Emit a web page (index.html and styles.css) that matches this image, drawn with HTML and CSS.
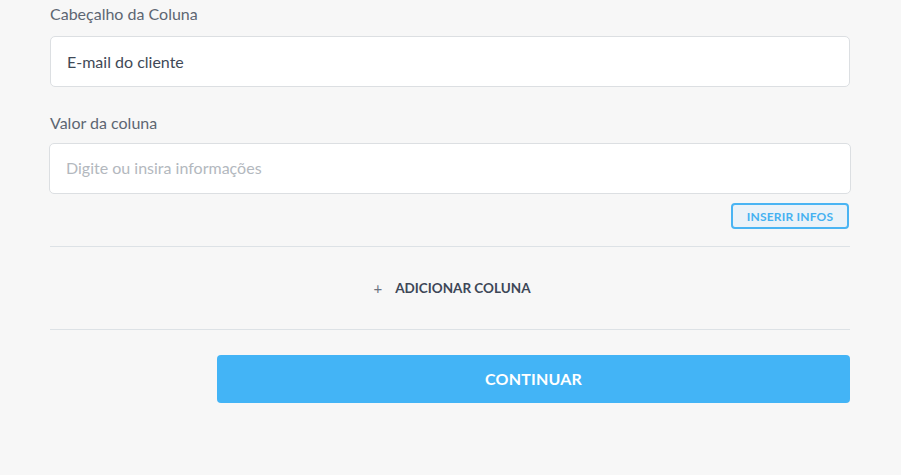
FILE: index.html
```html
<!DOCTYPE html>
<html lang="pt">
<head>
<meta charset="utf-8">
<link rel="stylesheet" href="styles.css">
</head>
<body>
<main class="form">
  <div class="field">
    <label class="label">Cabeçalho da Coluna</label>
    <div class="input">E-mail do cliente</div>
  </div>
  <div class="field field-2">
    <label class="label">Valor da coluna</label>
    <div class="input input-wide placeholder">Digite ou insira informações</div>
    <div class="insert-row"><button class="btn-outline">INSERIR INFOS</button></div>
  </div>
  <div class="add-row">
    <span class="plus">+</span><span class="add-text">ADICIONAR COLUNA</span>
  </div>
  <div class="actions">
    <button class="btn-primary">CONTINUAR</button>
  </div>
</main>
</body>
</html>
```

FILE: styles.css
```css
html, body {
  margin: 0;
  padding: 0;
  background: #f7f7f7;
  font-family: Lato, "Open Sans", sans-serif;
}
.form {
  width: 800px;
  margin-left: 50px;
  padding-top: 4px;
}
.field {
  display: flex;
  flex-direction: column;
}
.label {
  font-size: 16px;
  color: #5d6672;
  line-height: 20px;
  margin-bottom: 12px;
}
.input {
  box-sizing: border-box;
  height: 51px;
  background: #fff;
  border: 1px solid #dcdfe2;
  border-radius: 5px;
  padding: 0 16px;
  display: flex;
  align-items: center;
  font-size: 16px;
  color: #3f4957;
}
.field-2 {
  margin-top: 26px;
}
.field-2 .label {
  margin-bottom: 10px;
}
.input-wide {
  margin: 0 -1px;
  padding-bottom: 2px;
}
.placeholder {
  color: #b3b8be;
}
.insert-row {
  display: flex;
  justify-content: flex-end;
  margin-top: 9px;
  padding-right: 1px;
}
.btn-outline {
  box-sizing: border-box;
  width: 118px;
  height: 26px;
  border: 2px solid #4ab4f3;
  border-radius: 4px;
  background: #ebf2f8;
  color: #45b1f1;
  font-family: inherit;
  font-weight: 700;
  font-size: 12px;
  letter-spacing: 0.2px;
  padding: 0;
}
.add-row {
  margin-top: 17px;
  height: 82px;
  border-top: 1px solid #dde2e6;
  border-bottom: 1px solid #dde2e6;
  display: flex;
  justify-content: center;
  align-items: center;
  color: #3d4757;
}
.plus {
  font-size: 15px;
  color: #6b7380;
  margin-right: 13px;
  padding-left: 4px;
}
.add-text {
  font-size: 13.5px;
  font-weight: 700;
}
.actions {
  padding-left: 167px;
  margin-top: 25px;
}
.btn-primary {
  width: 100%;
  height: 48px;
  border: none;
  border-radius: 4px;
  background: #43b4f6;
  color: #fff;
  font-family: inherit;
  font-weight: 700;
  font-size: 16px;
  letter-spacing: 0.2px;
  padding: 0 0 2px;
}
```
